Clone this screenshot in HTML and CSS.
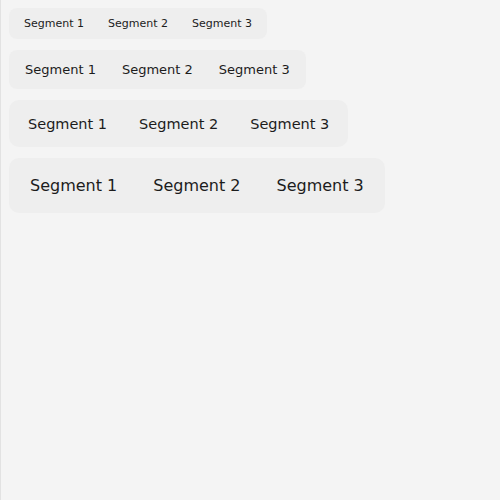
FILE: index.html
```html
<!DOCTYPE html>
<html>
<head>
<meta charset="utf-8">
<link rel="stylesheet" href="styles.css">
</head>
<body>
<div class="page">
  <div class="seg seg-xs">
    <span class="item">Segment 1</span>
    <span class="item">Segment 2</span>
    <span class="item">Segment 3</span>
  </div>
  <div class="seg seg-sm">
    <span class="item">Segment 1</span>
    <span class="item">Segment 2</span>
    <span class="item">Segment 3</span>
  </div>
  <div class="seg seg-md">
    <span class="item">Segment 1</span>
    <span class="item">Segment 2</span>
    <span class="item">Segment 3</span>
  </div>
  <div class="seg seg-lg">
    <span class="item">Segment 1</span>
    <span class="item">Segment 2</span>
    <span class="item">Segment 3</span>
  </div>
</div>
</body>
</html>
```
FILE: styles.css
```css
html, body {
  margin: 0;
  padding: 0;
  background: #f4f4f4;
}
.page {
  box-sizing: border-box;
  min-height: 500px;
  border-left: 1px solid #e2e2e2;
  padding: 8px;
  display: flex;
  flex-direction: column;
  align-items: flex-start;
  gap: 11px;
  font-family: "DejaVu Sans", sans-serif;
  color: #1c1c1c;
}
.seg {
  display: flex;
  padding: 3px;
  background: #eeeeee;
  border-radius: 8px;
}
.item {
  display: flex;
  align-items: center;
  white-space: nowrap;
}
.seg-xs .item { height: 25px; padding: 0 12px; font-size: 11px; }
.seg-sm .item { height: 33px; padding: 0 13px; font-size: 13px; }
.seg-md { border-radius: 10px; }
.seg-md .item { height: 41px; padding: 0 16px; font-size: 14.5px; }
.seg-lg { border-radius: 10px; }
.seg-lg .item { height: 49px; padding: 0 18px; font-size: 16px; }
```
